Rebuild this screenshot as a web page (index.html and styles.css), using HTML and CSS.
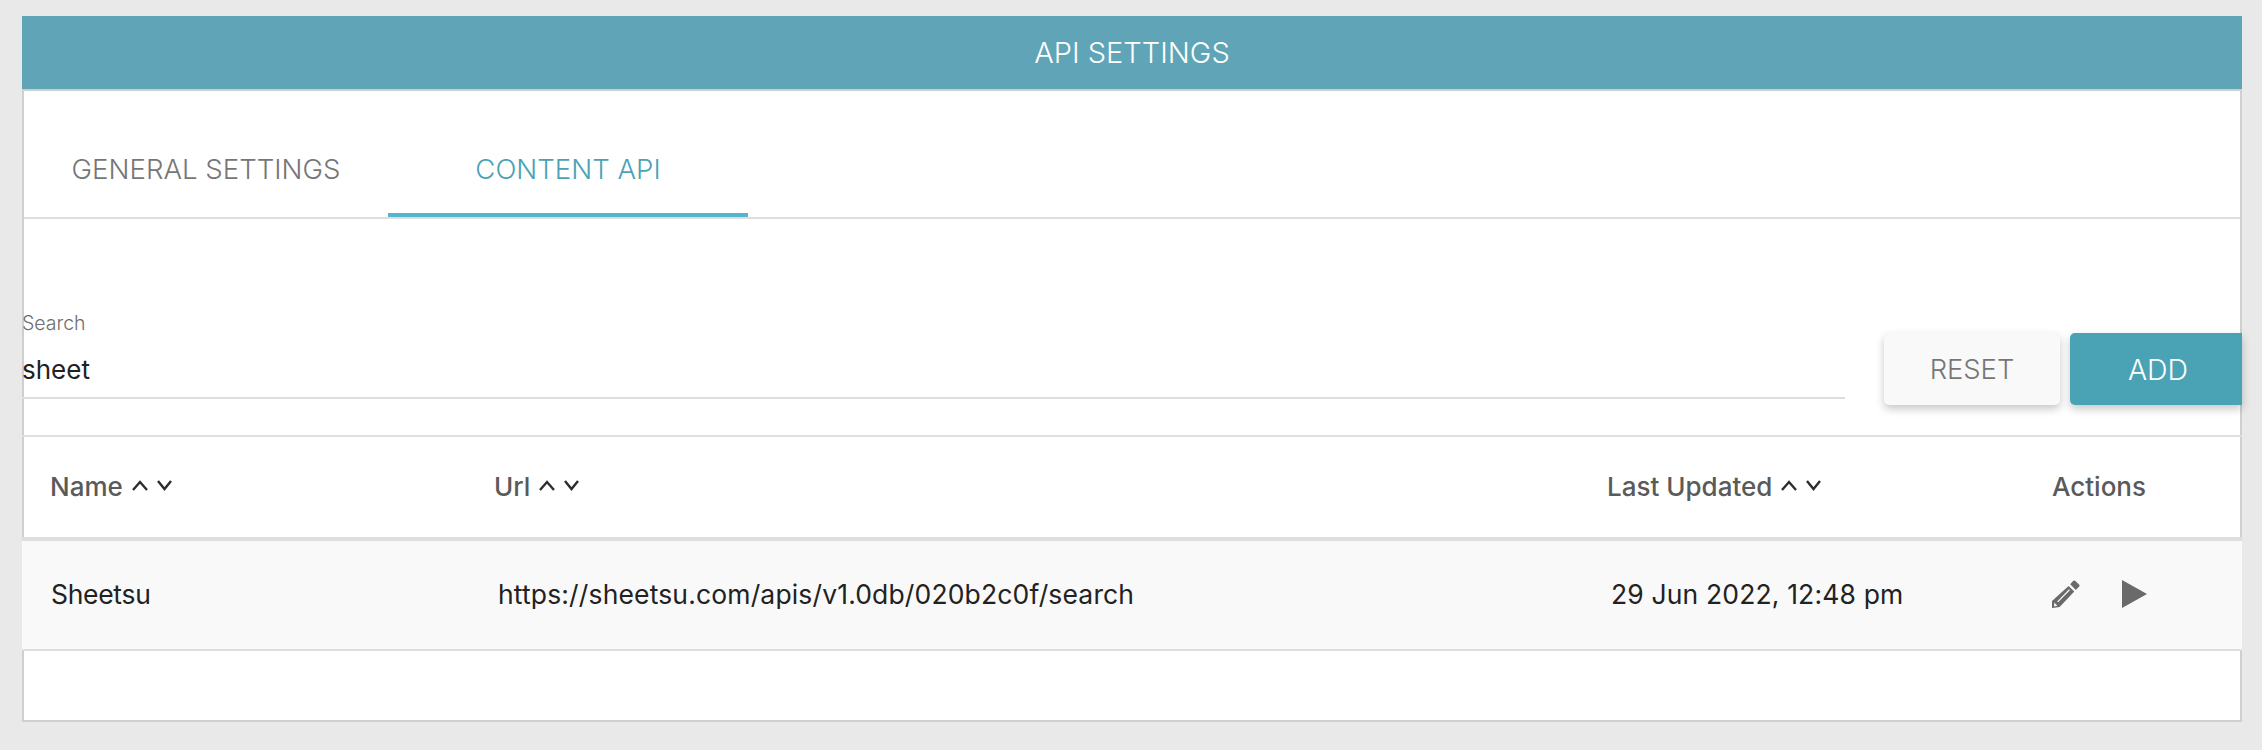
FILE: index.html
```html
<!DOCTYPE html>
<html lang="en">
<head>
<meta charset="utf-8">
<title>API Settings</title>
<link rel="stylesheet" href="styles.css">
</head>
<body>
<main class="card">
  <header class="card-title">API SETTINGS</header>
  <div class="card-body">
    <nav class="tabs">
      <a class="tab tab-general">GENERAL SETTINGS</a>
      <a class="tab tab-active">CONTENT API</a>
    </nav>
    <section class="toolbar">
      <div class="search">
        <label class="search-label">Search</label>
        <div class="search-value">sheet</div>
      </div>
      <button class="btn btn-reset">RESET</button>
      <button class="btn btn-add">ADD</button>
    </section>
    <div class="table-head row-grid">
      <div class="th">Name
        <svg class="sort" viewBox="0 0 40 14"><path d="M1 11 8 3l7 8M26 2l6.500 8 6.500-8"/></svg>
      </div>
      <div class="th">Url
        <svg class="sort" viewBox="0 0 40 14"><path d="M1 11 8 3l7 8M26 2l6.500 8 6.500-8"/></svg>
      </div>
      <div class="th">Last Updated
        <svg class="sort" viewBox="0 0 40 14"><path d="M1 11 8 3l7 8M26 2l6.500 8 6.500-8"/></svg>
      </div>
      <div class="th th-actions">Actions</div>
    </div>
    <div class="table-row row-grid">
      <div class="td td-name">Sheetsu</div>
      <div class="td td-shift">https://sheetsu.com/apis/v1.0db/020b2c0f/search</div>
      <div class="td td-shift">29 Jun 2022, 12:48 pm</div>
      <div class="td actions">
        <svg class="icon-edit" viewBox="0 0 28 28"><path fill-rule="evenodd" d="M18.2 4.3 21 1a1.7 1.7 0 0 1 2.400 0l3.600 3.400a1.7 1.7 0 0 1 0 2.400l-3.200 3.300zM16.600 5.900l5.700 5.700L7.600 27 .6 28H0v-7zM17 9.300 5.200 21.400l.9.9L17.900 10.200zM2.200 22.600l3.200 3.200-3.200.6z"/></svg>
        <svg class="icon-play" viewBox="0 0 25 28"><path d="M0 0 25 14 0 28z"/></svg>
      </div>
    </div>
    <div class="table-empty"></div>
  </div>
</main>
</body>
</html>
```
FILE: styles.css
```css
* { box-sizing: border-box; }
html, body { margin: 0; height: 750px; overflow: hidden; }
body {
  background: #e9e9e9;
  padding: 16px 20px 0 22px;
  font-family: "Inter", "Liberation Sans", sans-serif;
}
.card { width: 2220px; }
.card-title {
  height: 75px;
  padding-bottom: 2px;
  background: #60a5b7;
  border-bottom: 2px solid #cfcfcf;
  background-clip: padding-box;
  color: #fff;
  font-size: 29px;
  font-weight: 300;
  line-height: 73px;
  text-align: center;
}
.card-body {
  border: 2px solid #cfcfcf;
  border-top: 0;
  background: #fff;
  height: 631px;
}
.tabs {
  display: flex;
  height: 128px;
  border-bottom: 2px solid #dedede;
}
.tab {
  display: flex;
  align-items: center;
  justify-content: center;
  height: 126px;
  padding-top: 34px;
  border-bottom: 4px solid transparent;
  font-size: 27.6px;
  font-weight: 300;
  color: #767676;
}
.tab-general { width: 364px; }
.tab-active {
  width: 360px;
  color: #4aa3b5;
  border-bottom-color: #55b5cf;
}
.toolbar {
  display: flex;
  align-items: flex-start;
  height: 218px;
  padding-top: 114px;
  margin: 0 -2px;
  border-bottom: 2px solid #dedede;
}
.search {
  width: 1823px;
  height: 88px;
  margin-top: -22px;
  border-bottom: 2px solid #dedede;
}
.search-label {
  display: block;
  height: 24px;
  font-size: 19.5px;
  font-weight: 300;
  line-height: 24px;
  color: #6e6e6e;
}
.search-value {
  margin-top: 19px;
  font-size: 26px;
  font-weight: 400;
  line-height: 32px;
  color: #222;
}
.btn {
  height: 72px;
  border: 0;
  border-radius: 5px;
  font-family: inherit;
  font-size: 27.4px;
  font-weight: 300;
  box-shadow: 0 4px 8px rgba(0, 0, 0, .22);
}
.btn-reset {
  width: 176px;
  margin-left: 39px;
  background: #f9f9f9;
  color: #767676;
}
.btn-add {
  width: 172px;
  margin-left: 10px;
  padding-left: 10px;
  border-radius: 5px 0 0 5px;
  background: #4aa3b5;
  font-size: 28.5px;
  color: #fff;
}
.row-grid {
  display: grid;
  grid-template-columns: 444px 1113px 444px 1fr;
  align-items: center;
  padding-left: 26px;
}
.table-head {
  height: 100px;
  padding-bottom: 2px;
}
.th {
  font-size: 26px;
  font-weight: 500;
  color: #5a5a5a;
  display: flex;
  align-items: center;
  gap: 9px;
}
.th-actions { padding-left: 1px; }
.sort {
  width: 40px;
  height: 14px;
  fill: none;
  stroke: #2d2d2d;
  stroke-width: 2.4;
}
.table-row {
  margin: 0 -2px;
  padding-left: 29px;
  padding-bottom: 2px;
  height: 114px;
  background: #f9f9f9;
  border-top: 4px solid #dedede;
  border-bottom: 2px solid #dedede;
}
.td {
  font-size: 26.5px;
  letter-spacing: .15px;
  color: #222;
}
.td-name { letter-spacing: -.3px; }
.td-shift { padding-left: 3px; }
.actions {
  display: flex;
  align-items: center;
  gap: 42px;
}
.icon-edit { width: 28px; height: 28px; fill: #6a6a6a; }
.icon-play { width: 25px; height: 28px; fill: #6a6a6a; }
```
